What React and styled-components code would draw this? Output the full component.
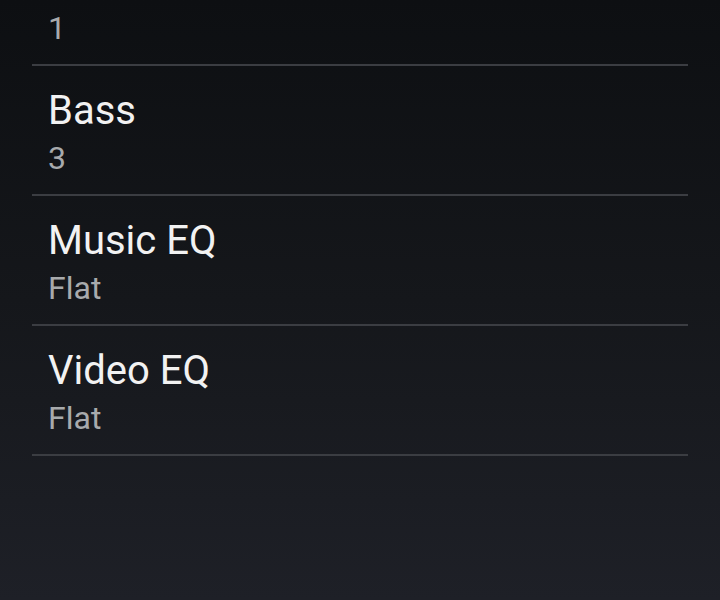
import React from "react";
import styled, { createGlobalStyle } from "styled-components";

const GlobalStyle = createGlobalStyle`
  html, body {
    margin: 0;
    padding: 0;
    height: 100%;
  }
  body {
    font-family: Roboto, "Noto Sans", sans-serif;
    background: #0e1013;
    overflow: hidden;
  }
`;

// first row is scrolled past: only its value still shows
const settings = [
  { title: null, value: "1" },
  { title: "Bass", value: "3" },
  { title: "Music EQ", value: "Flat" },
  { title: "Video EQ", value: "Flat" },
];

export default function App() {
  return (
    <Screen>
      <GlobalStyle />
      <SettingsList>
        {settings.map((item) => (
          <SettingItem key={item.value + item.title} $clipped={!item.title}>
            {item.title && <SettingTitle>{item.title}</SettingTitle>}
            <SettingValue $first={!item.title}>{item.value}</SettingValue>
          </SettingItem>
        ))}
      </SettingsList>
    </Screen>
  );
}

const Screen = styled.div`
  width: 720px;
  height: 600px;
  overflow: hidden;
  background: linear-gradient(180deg, #0d0f12 0%, #15171b 50%, #1e2027 100%);
`;

const SettingsList = styled.ul`
  list-style: none;
  margin: 0;
  padding: 0 32px;
`;

const SettingItem = styled.li`
  display: flex;
  flex-direction: column;
  box-sizing: border-box;
  height: ${(p) => (p.$clipped ? "66px" : "130px")};
  padding: ${(p) => (p.$clipped ? "8px" : "21px")} 16px 0;
  border-bottom: 2px solid #3b3d42;
`;

const SettingTitle = styled.div`
  color: #f2f2f2;
  font-size: 40px;
  line-height: 48px;
`;

const SettingValue = styled.div`
  margin-top: ${(p) => (p.$first ? "0" : "3px")};
  color: #a8aaac;
  font-size: 32px;
  line-height: 40px;
`;
